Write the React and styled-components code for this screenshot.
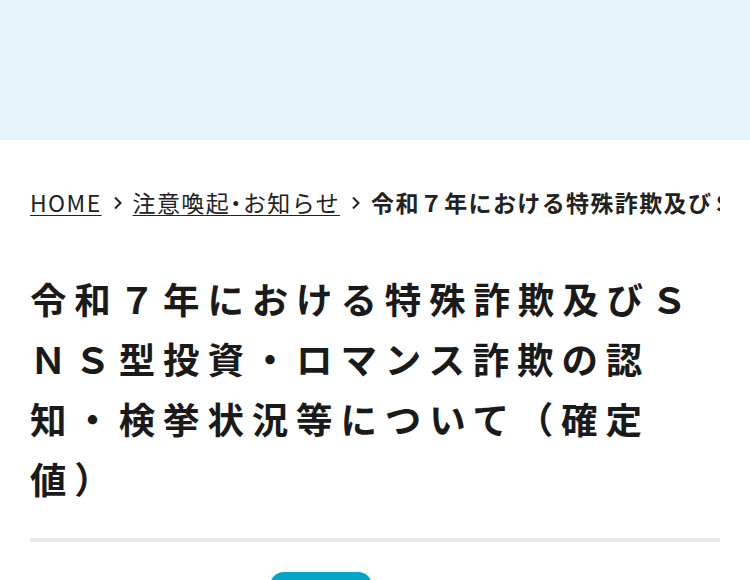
import React from "react";
import styled, { createGlobalStyle } from "styled-components";

const Global = createGlobalStyle`
  html, body { margin: 0; padding: 0; background: #fff; }
  body { font-family: "Noto Sans CJK JP", "Noto Sans", sans-serif; color: #222; }
`;

const Page = styled.div`
  width: 750px;
  height: 580px;
  overflow: hidden;
  display: flex;
  flex-direction: column;
`;

const HeaderBand = styled.header`
  height: 140px;
  background: #e5f4fa;
  flex-shrink: 0;
`;

const Main = styled.main`
  padding: 46px 30px 0;
  display: flex;
  flex-direction: column;
`;

const Breadcrumb = styled.nav`
  display: flex;
  align-items: center;
  white-space: nowrap;
  overflow: hidden;
  font-size: 23px;
  line-height: 33px;
  letter-spacing: 0.06em;
`;

const Crumb = styled.a`
  color: #222;
  text-decoration: underline;
  text-underline-offset: 3px;
  text-decoration-thickness: 1px;
  flex-shrink: 0;
`;

const NarrowDot = styled.span`
  font-feature-settings: "halt";
`;

const Current = styled.span`
  font-weight: 700;
  flex-shrink: 0;
`;

const Chevron = styled.svg`
  width: 10px;
  height: 14px;
  margin: 0 10px 0 11px;
  flex-shrink: 0;
`;

const Title = styled.h1`
  margin: 50px 0 0;
  font-size: 36.5px;
  line-height: 60px;
  font-weight: 700;
  letter-spacing: 0.215em;
  color: #1a1a1a;
  line-break: strict;
`;

const Divider = styled.hr`
  margin: 29px 0 0;
  border: none;
  height: 4px;
  background: #e4eaeb;
`;

const ButtonRow = styled.div`
  display: flex;
  padding-left: 240px;
  margin-top: 30px;
`;

const Pill = styled.div`
  width: 102px;
  height: 40px;
  border-radius: 14px;
  background: #05a5c8;
`;

const Arrow = () => (
  <Chevron viewBox="0 0 10 14" aria-hidden="true">
    <path d="M2 1.5 L7.5 7 L2 12.5" fill="none" stroke="#222" strokeWidth="2" />
  </Chevron>
);

const title =
  "令和７年における特殊詐欺及びＳＮＳ型投資・ロマンス詐欺の認知・検挙状況等について（確定値）";

export default function App() {
  return (
    <Page>
      <Global />
      <HeaderBand />
      <Main>
        <Breadcrumb>
          <Crumb href="#">HOME</Crumb>
          <Arrow />
          <Crumb href="#">
            注意喚起<NarrowDot>・</NarrowDot>お知らせ
          </Crumb>
          <Arrow />
          <Current>{title}</Current>
        </Breadcrumb>
        <Title>{title}</Title>
        <Divider />
        <ButtonRow>
          <Pill />
        </ButtonRow>
      </Main>
    </Page>
  );
}
